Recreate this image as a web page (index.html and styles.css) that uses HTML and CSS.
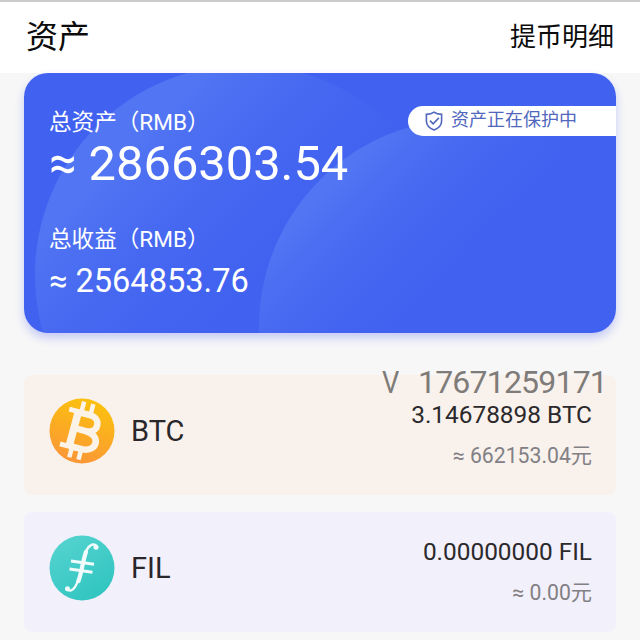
FILE: index.html
```html
<!DOCTYPE html>
<html lang="zh-CN">
<head>
<meta charset="utf-8">
<title>资产</title>
<link rel="stylesheet" href="styles.css">
</head>
<body>
<header class="topbar">
  <h1 class="title">资产</h1>
  <a class="details">提币明细</a>
</header>
<main class="content">
  <section class="summary">
    <svg class="rings" viewBox="0 0 592 260" aria-hidden="true">
      <defs>
        <linearGradient id="ring-a" x1="0.2" y1="0.2" x2="0.56" y2="0.56">
          <stop offset="0" stop-color="#5276f3"/>
          <stop offset="1" stop-color="#4162f0" stop-opacity="0"/>
        </linearGradient>
        <linearGradient id="ring-b" x1="0.16" y1="0.16" x2="0.44" y2="0.44">
          <stop offset="0" stop-color="#5276f3"/>
          <stop offset="1" stop-color="#4162f0" stop-opacity="0"/>
        </linearGradient>
      </defs>
      <circle cx="221" cy="202" r="210" fill="url(#ring-a)"/>
      <circle cx="443" cy="254" r="208" fill="url(#ring-b)"/>
    </svg>
    <div class="label total-label">总资产（RMB）</div>
    <div class="total"><span class="approx">≈</span> 2866303.54</div>
    <div class="label income-label">总收益（RMB）</div>
    <div class="income"><span class="approx">≈</span> 2564853.76</div>
    <div class="badge">
      <svg class="shield" viewBox="0 0 18 20" aria-hidden="true">
        <path d="M9 1.2C7 2.8 4.3 3.4 1.4 3.4V10c0 4.4 3 7.200 7.600 8.900 4.600-1.700 7.600-4.500 7.600-8.900V3.400C13.700 3.400 11 2.800 9 1.200Z"/>
        <path d="M5 9.600l3.100 3.200 5.800-5.900"/>
      </svg>
      <span>资产正在保护中</span>
    </div>
  </section>
  <section class="coin btc">
    <svg class="logo" viewBox="0 0 66 66" aria-hidden="true">
      <defs><linearGradient id="gold" x1="0.65" y1="0" x2="0.35" y2="1">
        <stop offset="0" stop-color="#fbc20c"/><stop offset="1" stop-color="#fb9638"/>
      </linearGradient></defs>
      <circle cx="33" cy="33" r="32.500" fill="url(#gold)"/>
      <g transform="translate(32.500 33) rotate(15)" fill="none" stroke="#fbf3e8">
        <path stroke-width="4.500" d="M-5-29v12M4.500-29v12M-5 17v11.500M4.500 17v11.500"/>
        <path stroke-width="5" d="M-17.500-18H5M-17.500 18H5"/>
        <path stroke-width="7.500" d="M-8-18v36"/>
        <path stroke-width="6.500" d="M-6-17.500H4c13 0 13 16.500 0 16.500H-6M4-1c17 0 17 18.500 0 18.500H-6"/>
      </g>
    </svg>
    <div class="name">BTC</div>
    <div class="amounts">
      <div class="amount">3.14678898 BTC</div>
      <div class="value"><span class="approx">≈</span> 662153.04元</div>
    </div>
    <div class="watermark"><span class="mark">V</span>17671259171</div>
  </section>
  <section class="coin fil">
    <svg class="logo" viewBox="0 0 66 66" aria-hidden="true">
      <defs><linearGradient id="teal" x1="0.2" y1="0" x2="0.8" y2="1">
        <stop offset="0" stop-color="#55d3d0"/><stop offset="1" stop-color="#2fc4bf"/>
      </linearGradient></defs>
      <circle cx="33" cy="33" r="32.500" fill="url(#teal)"/>
      <g fill="none" stroke="#f1fbfc" stroke-linecap="round">
        <path stroke-width="2.400" d="M48 12c-2-4-8-4-11.500 6M17.500 54c4 4 9 0 11.500-9"/>
        <path stroke-width="4.200" d="M37 17c-3 8-4 19-7.500 29"/>
        <path stroke-width="3" stroke-linecap="butt" d="M22 26l23 3.200M20.500 34l23 3.200"/>
      </g>
      <circle cx="47" cy="12.200" r="2.500" fill="#f1fbfc"/>
      <circle cx="18.500" cy="53.700" r="2.500" fill="#f1fbfc"/>
    </svg>
    <div class="name">FIL</div>
    <div class="amounts">
      <div class="amount">0.00000000 FIL</div>
      <div class="value"><span class="approx">≈</span> 0.00元</div>
    </div>
  </section>
</main>
</body>
</html>
```

FILE: styles.css
```css
* { box-sizing: border-box; }
body {
  margin: 0;
  height: 640px;
  overflow: hidden;
  background: #f7f7f7;
  font-family: Roboto, "Noto Sans CJK SC", sans-serif;
  white-space: nowrap;
}
.topbar {
  display: flex;
  justify-content: space-between;
  align-items: center;
  height: 73px;
  padding: 0 26px;
  border-top: 2px solid #cacaca;
  background: #fff;
  color: #0b0b0b;
}
.title { margin: -2px 0 0; font-size: 32px; font-weight: 400; line-height: 70px; }
.details { margin-top: -1px; font-size: 26px; line-height: 70px; }
.content { padding: 0 24px; }
.summary {
  position: relative;
  height: 260px;
  padding: 35px 25px 0;
  border-radius: 24px;
  overflow: hidden;
  background: #4162f0;
  color: #fff;
}
.content::before {
  content: "";
  position: absolute;
  left: 24px;
  top: 73px;
  width: 592px;
  height: 260px;
  border-radius: 24px;
  box-shadow: 0 5px 10px rgba(65, 85, 240, .28);
}
.rings { position: absolute; left: 0; top: 0; width: 592px; height: 260px; }
.label { position: relative; font-size: 22.600px; line-height: 30px; }
.total { position: relative; margin-top: -1px; font-size: 48.800px; line-height: 54px; }
.income-label { margin-top: 34px; }
.income { position: relative; margin-top: 7px; font-size: 32.600px; line-height: 38px; }
.badge {
  position: absolute;
  right: 0;
  top: 33px;
  display: flex;
  align-items: center;
  gap: 9px;
  width: 208px;
  height: 30px;
  padding-left: 17px;
  border-radius: 15px 0 0 15px;
  background: #fff;
  color: #5067bd;
  font-size: 18px;
  line-height: 28px;
}
.badge span { margin: -2px 0 0 -1px; }
.shield { width: 18px; height: 20px; fill: none; stroke: #5067bd; stroke-width: 1.600; }
.coin {
  position: relative;
  display: flex;
  align-items: center;
  height: 120px;
  padding: 0 24px 0 25px;
  border-radius: 8px;
}
.btc { margin-top: 42px; background: #f9f1ec; }
.fil { margin-top: 17px; background: #f2f0fb; }
.logo { width: 66px; height: 66px; margin-top: -8px; }
.name { margin: -8px 0 0 16px; color: #29272a; font-size: 29px; line-height: 36px; }
.amounts { margin-left: auto; text-align: right; }
.amount { color: #2b292b; font-size: 24.400px; line-height: 30px; }
.value { margin-top: 12px; color: #828084; font-size: 21.200px; line-height: 28px; }
.watermark {
  position: absolute;
  right: 9px;
  top: -12px;
  display: flex;
  gap: 16px;
  color: #7e7b79;
  font-size: 32px;
  line-height: 38px;
  letter-spacing: -.8px;
}
.mark { transform: scaleX(.85); transform-origin: left; }
```
